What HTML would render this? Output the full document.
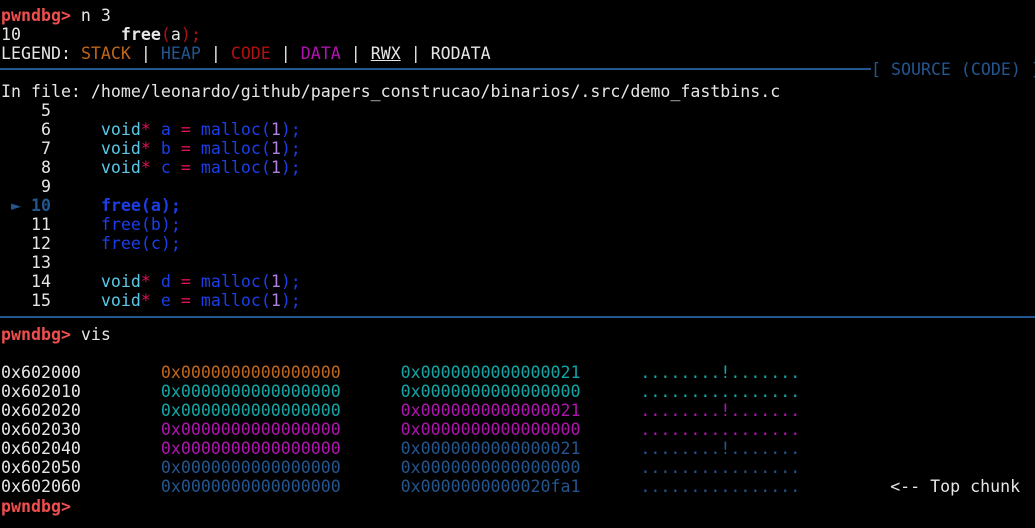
<!DOCTYPE html>
<html><head><meta charset="utf-8"><style>
html,body{margin:0;padding:0;background:#000;width:1035px;height:527px;overflow:hidden}
#w{position:absolute;left:1px;top:1px;width:1035px;height:527px}
.l{position:absolute;left:0;white-space:pre;font-family:"DejaVu Sans Mono","Liberation Mono",monospace;font-size:16.6px;line-height:19px;color:#e6e6e6;height:19px}
.p{color:#f04e4e;font-weight:bold}
.or{color:#c0661a}.cy{color:#12a5a5}.mg{color:#b013b0}.bl{color:#23558f}.rd{color:#b01010}
.cb{color:#1c3ee8}.vd{color:#5bc8e8}.pk{color:#e0105a}.pu{color:#b080e8}
.hr{position:absolute;left:-1px;height:2px;background:#23558f}
</style></head><body><div id="w">
<div class="l" style="top:5px"><span class="p">pwndbg&gt;</span> n 3</div>
<div class="l" style="top:24px">10          <b>free</b><span class="rd">(</span>a<span class="rd">);</span></div>
<div class="l" style="top:43px">LEGEND: <span class="or">STACK</span> | <span class="bl">HEAP</span> | <span class="rd">CODE</span> | <span class="mg">DATA</span> | <u>RWX</u> | RODATA</div>
<div class="hr" style="top:67px;width:871px"></div>
<div class="l bl" style="top:59px;left:870px">[ SOURCE (CODE) ]</div>
<div class="l" style="top:81px">In file: /home/leonardo/github/papers_construcao/binarios/.src/demo_fastbins.c</div>
<div class="l" style="top:100px">    5</div>
<div class="l" style="top:119px">    6     <span class="vd">void</span><span class="pk">*</span> <span class="cb">a</span> <span class="pk">=</span> <span class="cb">malloc(</span><span class="pu">1</span><span class="cb">);</span></div>
<div class="l" style="top:138px">    7     <span class="vd">void</span><span class="pk">*</span> <span class="cb">b</span> <span class="pk">=</span> <span class="cb">malloc(</span><span class="pu">1</span><span class="cb">);</span></div>
<div class="l" style="top:157px">    8     <span class="vd">void</span><span class="pk">*</span> <span class="cb">c</span> <span class="pk">=</span> <span class="cb">malloc(</span><span class="pu">1</span><span class="cb">);</span></div>
<div class="l" style="top:176px">    9</div>
<div class="l" style="top:195px"> <span class="bl">►</span> <b class="bl">10</b>     <b class="cb">free(a);</b></div>
<div class="l" style="top:214px">   11     <span class="cb">free(b);</span></div>
<div class="l" style="top:233px">   12     <span class="cb">free(c);</span></div>
<div class="l" style="top:252px">   13</div>
<div class="l" style="top:271px">   14     <span class="vd">void</span><span class="pk">*</span> <span class="cb">d</span> <span class="pk">=</span> <span class="cb">malloc(</span><span class="pu">1</span><span class="cb">);</span></div>
<div class="l" style="top:290px">   15     <span class="vd">void</span><span class="pk">*</span> <span class="cb">e</span> <span class="pk">=</span> <span class="cb">malloc(</span><span class="pu">1</span><span class="cb">);</span></div>
<div class="hr" style="top:315px;width:1036px"></div>
<div class="l" style="top:324px"><span class="p">pwndbg&gt;</span> vis</div>
<div class="l" style="top:362px">0x602000        <span class="or">0x0000000000000000</span>      <span class="cy">0x0000000000000021</span>      <span class="cy">........!.......</span></div>
<div class="l" style="top:381px">0x602010        <span class="cy">0x0000000000000000</span>      <span class="cy">0x0000000000000000</span>      <span class="cy">................</span></div>
<div class="l" style="top:400px">0x602020        <span class="cy">0x0000000000000000</span>      <span class="mg">0x0000000000000021</span>      <span class="mg">........!.......</span></div>
<div class="l" style="top:419px">0x602030        <span class="mg">0x0000000000000000</span>      <span class="mg">0x0000000000000000</span>      <span class="mg">................</span></div>
<div class="l" style="top:438px">0x602040        <span class="mg">0x0000000000000000</span>      <span class="bl">0x0000000000000021</span>      <span class="bl">........!.......</span></div>
<div class="l" style="top:457px">0x602050        <span class="bl">0x0000000000000000</span>      <span class="bl">0x0000000000000000</span>      <span class="bl">................</span></div>
<div class="l" style="top:476px">0x602060        <span class="bl">0x0000000000000000</span>      <span class="bl">0x0000000000020fa1</span>      <span class="bl">................</span>         &lt;-- Top chunk</div>
<div class="l" style="top:496px"><span class="p">pwndbg&gt;</span></div>
</div></body></html>
